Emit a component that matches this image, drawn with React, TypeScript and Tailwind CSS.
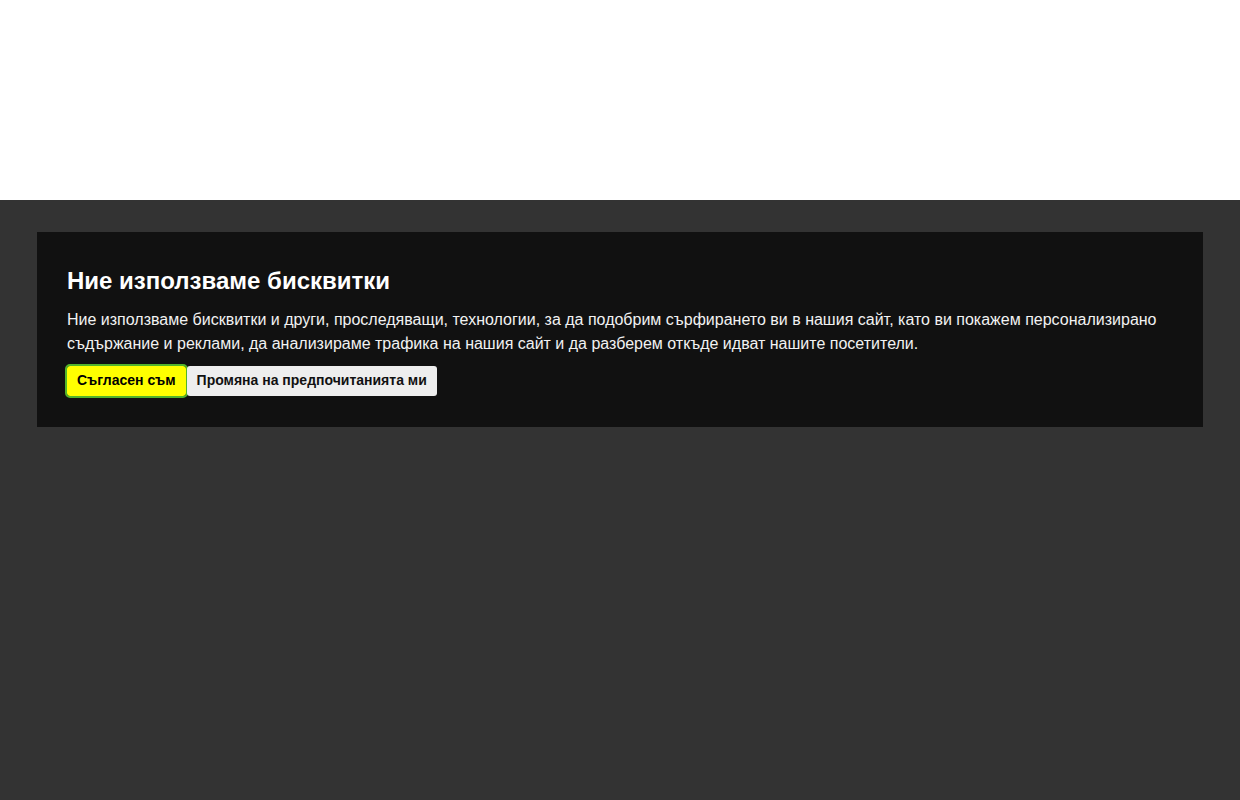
export default function App() {
  return (
    <div className="min-h-screen flex flex-col bg-[#333333] font-['Liberation_Sans',Arial,sans-serif]">
      <div className="h-[200px] bg-white" />
      <div className="px-[37px] pt-[32px]">
        <div className="bg-[#111111] px-[30px] pt-[30px] pb-[31px] text-white">
          <h2 className="mt-[5px] text-[24px] font-bold leading-[27.6px]">
            Ние използваме бисквитки
          </h2>
          <p className="mt-[13px] text-[16px] leading-[24px] text-[#f2f2f2]">
            Ние използваме бисквитки и други, проследяващи, технологии, за да подобрим сърфирането ви в нашия сайт, като ви покажем персонализирано съдържание и реклами, да анализираме трафика на нашия сайт и да разберем откъде идват нашите посетители.
          </p>
          <div className="mt-[10px] flex items-center gap-[1px]">
            <button className="h-[30px] rounded-[3px] bg-[#ffff00] px-[10px] text-[14px] font-bold text-black outline-2 outline-[#52b52a]">
              Съгласен съм
            </button>
            <button className="h-[30px] rounded-[3px] bg-[#eeeeee] px-[10px] text-[14px] font-bold text-[#111111]">
              Промяна на предпочитанията ми
            </button>
          </div>
        </div>
      </div>
    </div>
  );
}
